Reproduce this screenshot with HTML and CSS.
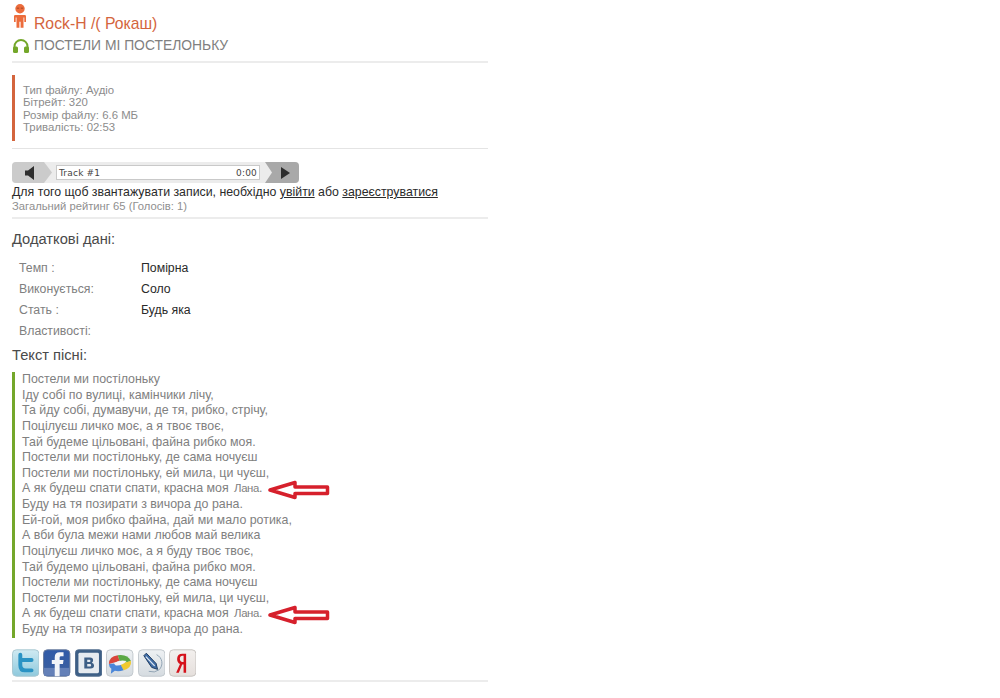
FILE: index.html
```html
<!DOCTYPE html>
<html lang="uk">
<head>
<meta charset="utf-8">
<title>Rock-H</title>
<link rel="stylesheet" href="styles.css">
</head>
<body>
<main class="page">
  <header class="head">
    <div class="artist">
      <svg class="man" width="12" height="24" viewBox="0 0 12 24"><circle cx="6" cy="4.800" r="4.700" fill="#ec6c3c"/><rect x="2.800" y="3.600" width="2.400" height="1.200" fill="#b04e2a"/><rect x="6.800" y="3.600" width="2.400" height="1.200" fill="#b04e2a"/><path d="M1.300 11h9.400q1.300 0 1.300 1.300V18h-1.700v-4.500H9.500V23.800H6.600v-6H5.400v6H2.500V13.500H1.700V18H0v-5.700Q0 11 1.300 11z" fill="#ec6c3c"/></svg>
      <span class="artist-name">Rock-H /( Рокаш)</span>
    </div>
    <div class="song">
      <svg width="16" height="14" viewBox="0 0 16 14"><path d="M1.500 10V7.500a6.500 6.500 0 0 1 13 0V10" fill="none" stroke="#74a72a" stroke-width="2"/><rect x="0" y="7.500" width="5" height="6.500" rx="1.500" fill="#74a72a"/><rect x="11" y="7.500" width="5" height="6.500" rx="1.500" fill="#74a72a"/></svg>
      <span>ПОСТЕЛИ МІ ПОСТЕЛОНЬКУ</span>
    </div>
  </header>

  <section class="info">
    <div>Тип файлу: Аудіо</div>
    <div>Бітрейт: 320</div>
    <div>Розмір файлу: 6.6 МБ</div>
    <div>Тривалість: 02:53</div>
  </section>

  <section class="listen">
    <div class="player">
      <div class="btn btn-left"><svg width="9" height="14" viewBox="0 0 9 14"><path d="M0 4.500h3L9 0v14l-6-4.500H0z" fill="#2e2e2e"/></svg></div>
      <div class="track"><span>Track #1</span><span>0:00</span></div>
      <div class="btn btn-right"><svg width="9" height="12" viewBox="0 0 9 12"><path d="M0 0l9 6-9 6z" fill="#2e2e2e"/></svg></div>
    </div>
    <p class="notice">Для того щоб звантажувати записи, необхідно <a href="#">увійти</a> або <a href="#">зареєструватися</a></p>
    <p class="rating">Загальний рейтинг 65 (Голосів: 1)</p>
  </section>

  <h2 class="title-extra">Додаткові дані:</h2>
  <dl class="props">
    <dt>Темп :</dt><dd>Помірна</dd>
    <dt>Виконується:</dt><dd>Соло</dd>
    <dt>Стать :</dt><dd>Будь яка</dd>
    <dt>Властивості:</dt><dd></dd>
  </dl>

  <h2 class="title-lyrics">Текст пісні:</h2>
  <div class="lyrics">
    <div>Постели ми постілоньку</div>
    <div>Іду собі по вулиці, камінчики лічу,</div>
    <div>Та йду собі, думавучи, де тя, рибко, стрічу,</div>
    <div>Поцілуєш личко моє, а я твоє твоє,</div>
    <div>Тай будеме цільовані, файна рибко моя.</div>
    <div>Постели ми постілоньку, де сама ночуєш</div>
    <div>Постели ми постілоньку, ей мила, ци чуєш,</div>
    <div class="marked">А як будеш спати спати, красна моя <span class="lana">Лана</span>.
      <svg class="arrow" width="62" height="20" viewBox="0 0 62 20"><path d="M2 10L27 2.500v4.500h32.500v6.500H27V17.500z" fill="#fff" stroke="#d6202c" stroke-width="3.500" stroke-linejoin="round"/></svg></div>
    <div>Буду на тя позирати з вичора до рана.</div>
    <div>Ей-гой, моя рибко файна, дай ми мало ротика,</div>
    <div>А вби була межи нами любов май велика</div>
    <div>Поцілуєш личко моє, а я буду твоє твоє,</div>
    <div>Тай будемо цільовані, файна рибко моя.</div>
    <div>Постели ми постілоньку, де сама ночуєш</div>
    <div>Постели ми постілоньку, ей мила, ци чуєш,</div>
    <div class="marked">А як будеш спати спати, красна моя <span class="lana">Лана</span>.
      <svg class="arrow" width="62" height="20" viewBox="0 0 62 20"><path d="M2 10L27 2.500v4.500h32.500v6.500H27V17.500z" fill="#fff" stroke="#d6202c" stroke-width="3.500" stroke-linejoin="round"/></svg></div>
    <div>Буду на тя позирати з вичора до рана.</div>
  </div>

  <div class="share">
    <svg class="soc" viewBox="0 0 28 28"><defs><linearGradient id="tw" x1="0" y1="0" x2="0" y2="1"><stop offset="0" stop-color="#cfeaf2"/><stop offset="1" stop-color="#8ec9dd"/></linearGradient><linearGradient id="fb" x1="0" y1="0" x2="0" y2="1"><stop offset="0" stop-color="#2f5aa8"/><stop offset="1" stop-color="#3d5f9e"/></linearGradient><linearGradient id="gr" x1="0" y1="0" x2="0" y2="1"><stop offset="0" stop-color="#eef1f3"/><stop offset="1" stop-color="#d5dbe0"/></linearGradient></defs><rect x=".5" y=".5" width="27" height="27" rx="4" fill="url(#tw)" stroke="#a9c8d2"/><path d="M6.500 5.500q0-2 2-2t2 2V9H20q2 0 2 2t-2 2h-9.500v3q0 3.500 3.500 3.500h6q2 0 2 2t-2 2h-7Q6.500 23.500 6.500 16z" fill="#2a93c4"/></svg>
    <svg class="soc" viewBox="0 0 28 28"><rect x=".5" y=".5" width="27" height="27" rx="4" fill="url(#fb)" stroke="#6c7d9e"/><path d="M1 19h26v8H1z" fill="#6480b8"/><path d="M12 27.500V15H9v-4h3V8q0-5 5-5h4v4h-2.500q-1.500 0-1.500 1.500V11h4l-.6 4H17v12.500z" fill="#f2f4f8"/></svg>
    <svg class="soc" viewBox="0 0 28 28"><rect x=".5" y=".5" width="27" height="27" rx="3" fill="#3d5f86" stroke="#55708f"/><rect x="3.500" y="3.500" width="21" height="21" rx="1.500" fill="#e6ebf0"/><path d="M9.500 8.500h6q3 0 3 2.800 0 1.700-1.300 2.400 2.300.7 2.300 2.900 0 3-3.500 3H9.500zm3 2.200v2.300h2.300q1 0 1-1.150t-1-1.150zm0 4.400v2.500h2.800q1.200 0 1.200-1.250t-1.200-1.250z" fill="#3d5f86"/></svg>
    <svg class="soc" viewBox="0 0 28 28"><rect x=".5" y=".5" width="27" height="27" rx="4" fill="url(#gr)" stroke="#c3c9ce"/><path d="M3 15Q3 7 12 6l2 6z" fill="#d9463c"/><path d="M12 6q10-1.500 13.500 6L15 15z" fill="#5aa845"/><path d="M25.500 12q1 7-7.500 9.500L14 15z" fill="#f0c92f"/><path d="M3 15l11-1 4 7.500q-5 1.500-9 .5l-4 3 .5-5Q3 18 3 15z" fill="#4a86d8"/><path d="M8 14.500q6-4.500 13-2.500-4 5-11 4.500z" fill="#f2f3f4"/></svg>
    <svg class="soc" viewBox="0 0 28 28"><rect x=".5" y=".5" width="27" height="27" rx="4" fill="url(#gr)" stroke="#c3c9ce"/><path d="M19 5.500a9.500 9.500 0 0 1 2.500 15.500q-4.500 3.500-10.500 1.500" fill="none" stroke="#8fa3b3" stroke-width="1"/><path d="M6 6.500L8.500 4l10 10.500 1.500 6-6-2z" fill="#3f6ca6" stroke="#1e3a5f" stroke-width="1"/><path d="M8 7.500l9 9.500" stroke="#dfe8f2" stroke-width="1.300"/></svg>
    <svg class="soc" viewBox="0 0 28 28"><defs><linearGradient id="ya" x1="0" y1="0" x2="0" y2="1"><stop offset="0" stop-color="#f3f0ee"/><stop offset="1" stop-color="#e5dfdc"/></linearGradient></defs><rect x=".5" y=".5" width="27" height="27" rx="4" fill="url(#ya)" stroke="#c9c5c2"/><path d="M17.500 24h-2.600v-8.500h-1.400L10 24H7.300l3.900-9Q8.300 13.500 8.300 9.800 8.300 4.500 13.800 4.500h3.700zm-2.600-17.300h-1q-2.800 0-2.800 3t2.800 3.400h1z" fill="#d5121b"/></svg>
  </div>
</main>
</body>
</html>
```

FILE: styles.css
```css
* { box-sizing: border-box; }
html, body { margin: 0; padding: 0; background: #fff; }
body { font-family: "Liberation Sans", Arial, sans-serif; color: #7b7b7b; height: 698px; overflow: hidden; }
.page { width: 476px; margin-left: 12px; }

.head { padding-top: 3px; height: 63px; border-bottom: 2px solid #ececec; }
.artist { display: flex; align-items: flex-end; gap: 8px; height: 28px; }
.man { flex: none; margin-left: 2px; margin-bottom: 3px; }
.artist-name { font-size: 15.750px; line-height: 18px; color: #d4653d; margin-bottom: -2px; }
.song { display: flex; align-items: center; gap: 5px; height: 20px; margin-top: 4px; font-size: 13.860px; color: #808080; }
.song svg { flex: none; margin-left: 1px; margin-top: 1px; }

.info { margin-top: 12px; padding: 9px 0 0 8px; height: 66px; border-left: 3px solid #d4653d; font-size: 11.400px; line-height: 12.400px; color: #8c8c8c; }

.listen { margin-top: 7px; padding-top: 13px; border-top: 1px solid #e4e4e4; height: 71px; border-bottom: 2px solid #ececec; }
.player { display: flex; align-items: center; width: 287px; height: 21px; background: #ececec; border-radius: 4px; overflow: hidden; }
.btn { display: flex; align-items: center; height: 21px; flex: none; }
.btn-left { background: #cbcbcb; clip-path: polygon(0 0, 32px 0, 40px 50%, 32px 100%, 0 100%); width: 40px; padding-left: 13px; }
.btn-right { background: #a9a9a9; clip-path: polygon(0 0, 100% 0, 100% 100%, 0 100%, 7px 50%); width: 34px; padding-left: 16px; margin-left: auto; }
.track { display: flex; justify-content: space-between; align-items: center; width: 204px; height: 15px; margin-left: 4px; padding: 0 2px; background: #fff; border: 1px solid #c9c9c9; font-family: "DejaVu Sans", sans-serif; font-size: 9px; color: #444; letter-spacing: .2px; }

.notice { margin: 1px 0 0; font-size: 12.330px; line-height: 16px; color: #2a2a2a; white-space: nowrap; }
.notice a { color: #2a2a2a; }
.rating { margin: -1px 0 0; font-size: 11.240px; line-height: 14px; color: #8f8f8f; }

.title-extra, .title-lyrics { margin: 0; font-weight: normal; font-size: 14.700px; color: #4a4a4a; }
.title-extra { margin-top: 11px; line-height: 18px; }
.props { display: grid; grid-template-columns: 122px 1fr; grid-auto-rows: 21px; margin: 10px 0 0; padding-left: 7px; font-size: 12.300px; line-height: 21px; }
.props dt { color: #808080; }
.props dd { margin: 0; color: #2a2a2a; }
.title-lyrics { margin-top: 3px; line-height: 20px; }

.lyrics { margin-top: 7px; height: 266px; padding: 0 0 0 7px; border-left: 3px solid #74a72a; font-size: 12.400px; line-height: 15.620px; color: #808080; }
.lyrics div { white-space: nowrap; }
.marked { position: relative; }
.lana { font-size: 11.400px; letter-spacing: -.4px; margin-left: 2px; }
.arrow { position: absolute; left: 246px; top: -1px; }

.share { display: flex; gap: 4px; height: 33px; margin-top: 11px; padding-bottom: 5px; border-bottom: 2px solid #ececec; }
.soc { width: 27.400px; height: 28px; flex: none; }
```
